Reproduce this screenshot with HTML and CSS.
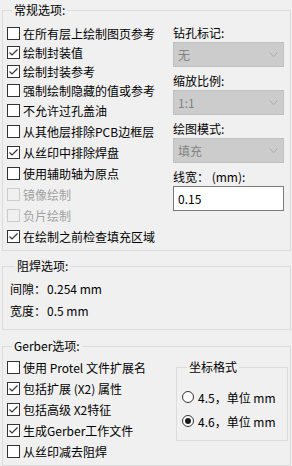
FILE: index.html
```html
<!DOCTYPE html>
<html lang="zh-CN">
<head>
    <meta charset="UTF-8">
    <meta name="viewport" content="width=device-width, initial-scale=1.0">
    <title>绘图选项</title>
    <link rel="stylesheet" href="styles.css">
</head>
<body>
    <fieldset class="group general">
        <legend>常规选项:</legend>
        <div class="cols">
            <div class="opts">
                <label class="row"><span class="box"></span>在所有层上绘制图页参考</label>
                <label class="row"><span class="box"><svg width="11" height="11" viewBox="0 0 11 11"><polyline points="1.5,5.5 4,8 9.5,2.5" fill="none" stroke="#333" stroke-width="1.2"/></svg></span>绘制封装值</label>
                <label class="row"><span class="box"><svg width="11" height="11" viewBox="0 0 11 11"><polyline points="1.5,5.5 4,8 9.5,2.5" fill="none" stroke="#333" stroke-width="1.2"/></svg></span>绘制封装参考</label>
                <label class="row"><span class="box"></span>强制绘制隐藏的值或参考</label>
                <label class="row loose"><span class="box"></span>不允许过孔盖油</label>
                <label class="row loose"><span class="box"></span>从其他层排除PCB边框层</label>
                <label class="row loose"><span class="box"><svg width="11" height="11" viewBox="0 0 11 11"><polyline points="1.5,5.5 4,8 9.5,2.5" fill="none" stroke="#333" stroke-width="1.2"/></svg></span>从丝印中排除焊盘</label>
                <label class="row loose"><span class="box"></span>使用辅助轴为原点</label>
                <label class="row loose disabled"><span class="box"></span>镜像绘制</label>
                <label class="row loose disabled"><span class="box"></span>负片绘制</label>
                <label class="row loose"><span class="box"><svg width="11" height="11" viewBox="0 0 11 11"><polyline points="1.5,5.5 4,8 9.5,2.5" fill="none" stroke="#333" stroke-width="1.2"/></svg></span>在绘制之前检查填充区域</label>
            </div>
            <div class="side">
                <div class="cap">钻孔标记:</div>
                <div class="select">无<svg width="9" height="5" viewBox="0 0 9 5"><polyline points="0.5,0.5 4.5,4.5 8.5,0.5" fill="none" stroke="#a8a8a8"/></svg></div>
                <div class="cap">缩放比例:</div>
                <div class="select">1:1<svg width="9" height="5" viewBox="0 0 9 5"><polyline points="0.5,0.5 4.5,4.5 8.5,0.5" fill="none" stroke="#a8a8a8"/></svg></div>
                <div class="cap">绘图模式:</div>
                <div class="select">填充<svg width="9" height="5" viewBox="0 0 9 5"><polyline points="0.5,0.5 4.5,4.5 8.5,0.5" fill="none" stroke="#a8a8a8"/></svg></div>
                <div class="cap">线宽： (mm):</div>
                <input class="field" type="text" value="0.15">
            </div>
        </div>
    </fieldset>

    <fieldset class="group mask">
        <legend>阻焊选项:</legend>
        <div class="info"><span class="key">间隙：</span>0.254 mm</div>
        <div class="info"><span class="key">宽度：</span>0.5 mm</div>
    </fieldset>

    <fieldset class="group gerber">
        <legend>Gerber选项:</legend>
        <div class="cols">
            <div class="opts">
                <label class="row loose"><span class="box"></span>使用 Protel 文件扩展名</label>
                <label class="row loose"><span class="box"><svg width="11" height="11" viewBox="0 0 11 11"><polyline points="1.5,5.5 4,8 9.5,2.5" fill="none" stroke="#333" stroke-width="1.2"/></svg></span>包括扩展 (X2) 属性</label>
                <label class="row loose"><span class="box"><svg width="11" height="11" viewBox="0 0 11 11"><polyline points="1.5,5.5 4,8 9.5,2.5" fill="none" stroke="#333" stroke-width="1.2"/></svg></span>包括高级 X2特征</label>
                <label class="row loose"><span class="box"><svg width="11" height="11" viewBox="0 0 11 11"><polyline points="1.5,5.5 4,8 9.5,2.5" fill="none" stroke="#333" stroke-width="1.2"/></svg></span>生成Gerber工作文件</label>
                <label class="row loose"><span class="box"></span>从丝印减去阻焊</label>
            </div>
            <fieldset class="subgroup">
                <legend>坐标格式</legend>
                <label class="radio-row"><span class="radio"></span>4.5，单位 mm</label>
                <label class="radio-row"><span class="radio on"></span>4.6，单位 mm</label>
            </fieldset>
        </div>
    </fieldset>
</body>
</html>
```

FILE: styles.css
```css
body {
    margin: 0;
    width: 292px;
    height: 466px;
    overflow: hidden;
    background-color: #f0f0f0;
    font-family: "Noto Sans CJK SC", "Noto Sans", sans-serif;
    font-size: 12px;
    color: #000;
}
.group {
    margin: 0 1px 0 2px;
    padding: 4px 0 3px 4px;
    border: 1px solid #dcdcdc;
    min-width: 0;
}
.group legend,
.subgroup legend {
    margin-left: 5px;
    padding: 0 2px;
    height: 20px;
    line-height: 20px;
}
.mask {
    margin-top: 5px;
    padding: 2px 0 7px 7px;
}
.gerber {
    margin-top: 6px;
    padding: 1px 0 3px 4px;
}
.cols {
    display: flex;
    align-items: flex-start;
}
.opts {
    display: flex;
    flex-direction: column;
}
.row {
    display: flex;
    align-items: center;
    height: 19px;
    white-space: nowrap;
}
.row.loose {
    height: 21px;
}
.box {
    display: flex;
    align-items: center;
    justify-content: center;
    width: 11px;
    height: 11px;
    margin-right: 3px;
    border: 1px solid #333;
    background-color: #fff;
}
.disabled {
    color: #a0a0a0;
}
.disabled .box {
    border-color: #cccccc;
    background-color: #f0f0f0;
}
.side {
    margin-left: auto;
    margin-right: 6px;
    width: 111px;
    display: flex;
    flex-direction: column;
}
.cap {
    height: 18px;
    line-height: 18px;
    white-space: nowrap;
}
.select {
    box-sizing: border-box;
    height: 25px;
    margin-bottom: 5px;
    padding: 0 5px 0 4px;
    display: flex;
    align-items: center;
    justify-content: space-between;
    background-color: #cccccc;
    border: 1px solid #bfbfbf;
    color: #838383;
}
.field {
    box-sizing: border-box;
    width: 111px;
    height: 25px;
    margin: 0;
    padding: 0 4px;
    border: 1px solid #7a7a7a;
    background-color: #fff;
    font-family: inherit;
    font-size: 12px;
    color: #000;
    outline: none;
}
.info {
    display: flex;
    height: 22px;
    line-height: 22px;
}
.key {
    width: 37px;
}
.subgroup {
    margin: 0 2px 0 auto;
    width: 112px;
    box-sizing: border-box;
    padding: 8px 0 7px 5px;
    border: 1px solid #dcdcdc;
    min-width: 0;
}
.radio-row {
    display: flex;
    align-items: center;
    height: 24px;
    white-space: nowrap;
}
.radio {
    box-sizing: border-box;
    width: 12px;
    height: 12px;
    margin-right: 4px;
    border: 1px solid #333;
    border-radius: 50%;
    background-color: #fff;
    display: flex;
    align-items: center;
    justify-content: center;
}
.radio.on::after {
    content: "";
    width: 6px;
    height: 6px;
    border-radius: 50%;
    background-color: #1a1a1a;
}
```
